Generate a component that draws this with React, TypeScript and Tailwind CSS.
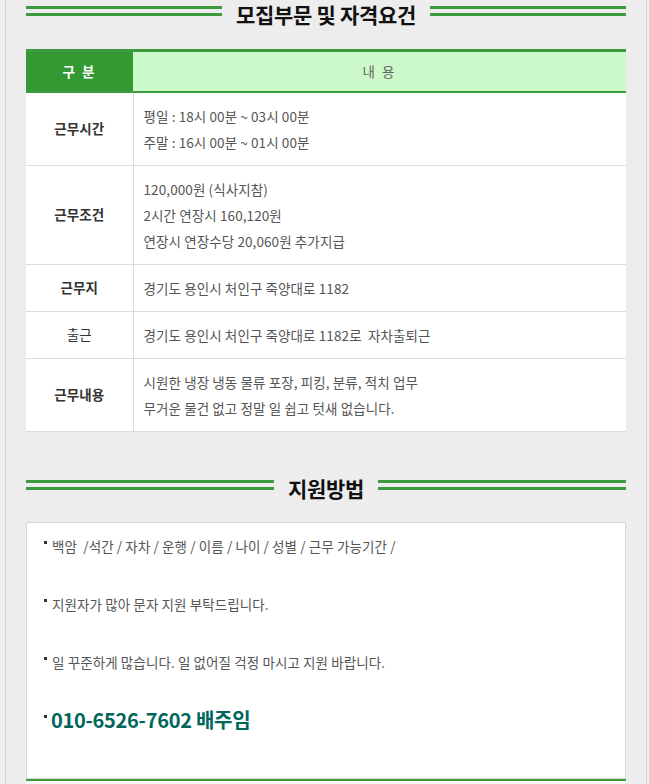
import React from 'react';

const rows = [
  { head: '근무시간', bold: true, lines: ['평일 : 18시 00분 ~ 03시 00분', '주말 : 16시 00분 ~ 01시 00분'] },
  { head: '근무조건', bold: true, lines: ['120,000원 (식사지참)', '2시간 연장시 160,120원', '연장시 연장수당 20,060원 추가지급'] },
  { head: '근무지', bold: true, lines: ['경기도 용인시 처인구 죽양대로 1182'] },
  { head: '출근', bold: false, lines: ['경기도 용인시 처인구 죽양대로 1182로  자차출퇴근'] },
  { head: '근무내용', bold: true, lines: ['시원한 냉장 냉동 물류 포장, 피킹, 분류, 적치 업무', '무거운 물건 없고 정말 일 쉽고 텃새 없습니다.'] },
];

const notes = [
  '백암  /석간 / 자차 / 운행 / 이름 / 나이 / 성별 / 근무 가능기간 /',
  '지원자가 많아 문자 지원 부탁드립니다.',
  '일 꾸준하게 많습니다. 일 없어질 걱정 마시고 지원 바랍니다.',
];

const SectionTitle: React.FC<{ title: string }> = ({ title }) => (
  <div className="flex items-center gap-[14px] h-[27px]">
    <div className="flex-1 h-[10px] -mt-[5px] border-y-[3px] border-[#3d9a3d]" />
    <h2 className="pt-[1px] text-[21px] font-bold text-[#111] leading-[26px] tracking-[-0.3px]">{title}</h2>
    <div className="flex-1 h-[10px] -mt-[5px] border-y-[3px] border-[#3d9a3d]" />
  </div>
);

const App: React.FC = () => {
  return (
    <div
      className="min-h-[784px] bg-[#ededed] pl-[5px] pr-[2px] text-[13.5px] text-[#555]"
      style={{ fontFamily: '"Noto Sans CJK KR", "Noto Sans", sans-serif' }}
    >
      <div className="min-h-[784px] border-x border-[#d3d3d3] px-[20px]">
        {/* 모집부문 */}
        <SectionTitle title="모집부문 및 자격요건" />

        <table className="mt-[22px] w-full border-collapse bg-white tracking-[0.1px]">
          <thead>
            <tr className="h-[41px] border-t-[3px] border-b-[2px] border-[#3d9a3d]">
              <th className="w-[107px] bg-[#339933] text-white font-bold tracking-[2px]">구 분</th>
              <th className="bg-[#ccf9c9] text-[#666] font-normal tracking-[2px]">내 용</th>
            </tr>
          </thead>
          <tbody>
            {rows.map((row) => (
              <tr key={row.head} className="border-b border-[#dcdcdc]">
                <td
                  className={`w-[107px] text-center border-r border-[#dcdcdc] text-[#333] ${row.bold ? 'font-bold' : ''}`}
                >
                  {row.head}
                </td>
                <td className="px-[10px] py-[10px] leading-[26px]">
                  {row.lines.map((line) => (
                    <div key={line} className="whitespace-pre">{line}</div>
                  ))}
                </td>
              </tr>
            ))}
          </tbody>
        </table>

        {/* 지원방법 */}
        <div className="mt-[42px]">
          <SectionTitle title="지원방법" />
        </div>

        <div className="mt-[21px] bg-white border border-[#d6d6d6] pl-[17px] pt-[10px] pb-[45px] tracking-[0.1px]">
          {notes.map((note, i) => (
            <div key={note} className={`flex items-start leading-[26px] ${i > 0 ? 'mt-[32px]' : ''}`}>
              <span className="mt-[8px] mr-[5px] w-[3px] h-[3px] bg-[#333] shrink-0" />
              <span className="whitespace-pre">{note}</span>
            </div>
          ))}
          <div className="flex items-start mt-[32px] leading-[26px]">
            <span className="mt-[8px] mr-[4px] w-[3px] h-[3px] bg-[#333] shrink-0" />
            <span className="text-[20px] font-bold text-[#00665c] tracking-[-0.3px]">010-6526-7602 배주임</span>
          </div>
        </div>
        <div className="h-[10px] border-t-[2px] border-[#3d9a3d] bg-[#f4fbf3]" />
      </div>
    </div>
  );
};

export default App;
